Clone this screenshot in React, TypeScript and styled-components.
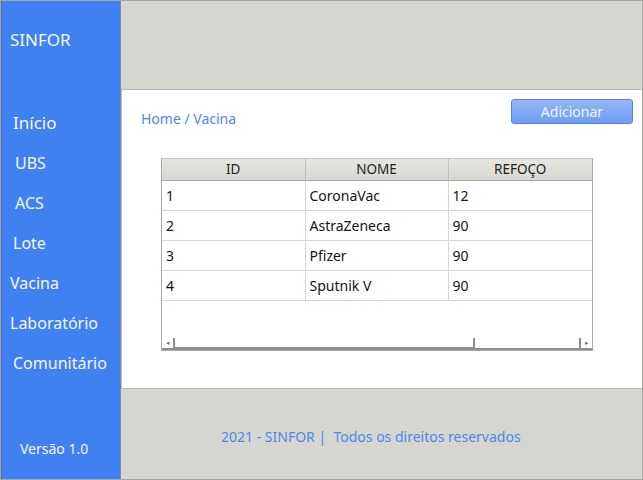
import styled, { createGlobalStyle } from "styled-components";

const GlobalStyle = createGlobalStyle`
  html, body {
    margin: 0;
    padding: 0;
    background: #d4d6cf;
  }
  * {
    box-sizing: border-box;
  }
`;

const MENU = [
  { label: "Início", indent: 11, size: 17 },
  { label: "UBS", indent: 13, size: 16 },
  { label: "ACS", indent: 13, size: 16 },
  { label: "Lote", indent: 11, size: 16 },
  { label: "Vacina", indent: 8, size: 16 },
  { label: "Laboratório", indent: 8, size: 16 },
  { label: "Comunitário", indent: 11, size: 16 },
];

const VACINAS = [
  { id: 1, nome: "CoronaVac", reforco: 12 },
  { id: 2, nome: "AstraZeneca", reforco: 90 },
  { id: 3, nome: "Pfizer", reforco: 90 },
  { id: 4, nome: "Sputnik V", reforco: 90 },
];

export default function App() {
  return (
    <>
      <GlobalStyle />
      <Frame>
        <Sidebar>
          <Brand>SINFOR</Brand>
          <Menu>
            {MENU.map((m) => (
              <MenuItem key={m.label} $indent={m.indent} $size={m.size}>
                {m.label}
              </MenuItem>
            ))}
          </Menu>
          <Version>Versão 1.0</Version>
        </Sidebar>

        <Main>
          <TopBand />
          <Panel>
            <PanelHead>
              <Breadcrumb>Home / Vacina</Breadcrumb>
              <AddButton>Adicionar</AddButton>
            </PanelHead>

            <TableBox>
              <Grid>
                <thead>
                  <tr>
                    <Th style={{ width: 143 }}>ID</Th>
                    <Th style={{ width: 143 }}>NOME</Th>
                    <Th>REFOÇO</Th>
                  </tr>
                </thead>
                <tbody>
                  {VACINAS.map((v) => (
                    <tr key={v.id}>
                      <Td>{v.id}</Td>
                      <Td>{v.nome}</Td>
                      <Td>{v.reforco}</Td>
                    </tr>
                  ))}
                </tbody>
              </Grid>
              <Filler />
              <ScrollBar>
                <Arrow>◂</Arrow>
                <Thumb />
                <Track />
                <Arrow>▸</Arrow>
              </ScrollBar>
            </TableBox>
          </Panel>
          <Footer>2021 - SINFOR |&nbsp; Todos os direitos reservados</Footer>
        </Main>
      </Frame>
    </>
  );
}

const Frame = styled.div`
  width: 643px;
  height: 480px;
  display: flex;
  border: 1px solid #a3a59f;
  font-family: "Noto Sans", "Open Sans", sans-serif;
  overflow: hidden;
`;

const Sidebar = styled.aside`
  width: 120px;
  flex-shrink: 0;
  background: #4081f2;
  border-left: 1px solid #3a6fd0;
  border-right: 1px solid #7d8a9c;
  color: #f4f7ff;
  display: flex;
  flex-direction: column;
`;

const Brand = styled.div`
  font-size: 17px;
  padding: 27px 0 0 8px;
  height: 102px;
`;

const Menu = styled.nav`
  display: flex;
  flex-direction: column;
`;

const MenuItem = styled.div<{ $indent: number; $size: number }>`
  height: 40px;
  line-height: 40px;
  padding-left: ${(p) => p.$indent}px;
  font-size: ${(p) => p.$size}px;
`;

const Version = styled.div`
  margin-top: auto;
  padding: 0 0 21px 18px;
  font-size: 14px;
`;

const Main = styled.div`
  flex: 1;
  display: flex;
  flex-direction: column;
  background: #d4d6cf;
`;

const TopBand = styled.div`
  height: 88px;
  flex-shrink: 0;
`;

const Panel = styled.section`
  height: 300px;
  flex-shrink: 0;
  background: #ffffff;
  border-top: 1px solid #b8bab4;
  border-left: 1px solid #b8bab4;
  border-bottom: 1px solid #b8bab4;
  padding: 9px 9px 0 19px;
`;

const PanelHead = styled.div`
  display: flex;
  justify-content: space-between;
  align-items: flex-start;
  height: 59px;
`;

const Breadcrumb = styled.div`
  margin-top: 10px;
  font-size: 14px;
  color: #4d87ef;
`;

const AddButton = styled.button`
  width: 122px;
  height: 25px;
  border: 1px solid #5585d6;
  border-radius: 3px;
  background: linear-gradient(#93b7f8, #6f9df3);
  color: #eef4ff;
  font-family: inherit;
  font-size: 14px;
  padding: 0;
`;

const TableBox = styled.div`
  width: 432px;
  height: 193px;
  margin-left: 20px;
  border: 1px solid #a9aaa6;
  border-top-color: #c4c5c0;
  display: flex;
  flex-direction: column;
  background: #fff;
`;

const Grid = styled.table`
  width: 430px;
  border-collapse: collapse;
  font-size: 14px;
  color: #141414;
`;

const Th = styled.th`
  height: 21px;
  padding: 0;
  font-weight: normal;
  font-size: 13.5px;
  color: #222;
  background: linear-gradient(#e6e6e1, #d7d8d2);
  border-right: 1px solid #c0c1bc;
  border-bottom: 1px solid #a8a9a4;
  &:last-child {
    border-right: none;
  }
`;

const Td = styled.td`
  height: 30px;
  padding: 0 0 0 4px;
  border-right: 1px solid #d6d6d6;
  border-bottom: 1px solid #d6d6d6;
  &:last-child {
    border-right: none;
  }
`;

const Filler = styled.div`
  flex: 1;
`;

const ScrollBar = styled.div`
  height: 12px;
  display: flex;
  align-items: stretch;
  border-bottom: 2px solid #8e8f8b;
`;

const Arrow = styled.div`
  width: 11px;
  font-size: 7px;
  line-height: 10px;
  color: #777;
  text-align: center;
`;

const Thumb = styled.div`
  width: 302px;
  border-left: 2px solid #8e8f8b;
  border-right: 2px solid #8e8f8b;
  border-bottom: 1px solid #8e8f8b;
`;

const Track = styled.div`
  flex: 1;
  border-right: 2px solid #8e8f8b;
`;

const Footer = styled.footer`
  flex: 1;
  padding-left: 100px;
  padding-top: 38px;
  font-size: 14px;
  color: #4d87ef;
`;
